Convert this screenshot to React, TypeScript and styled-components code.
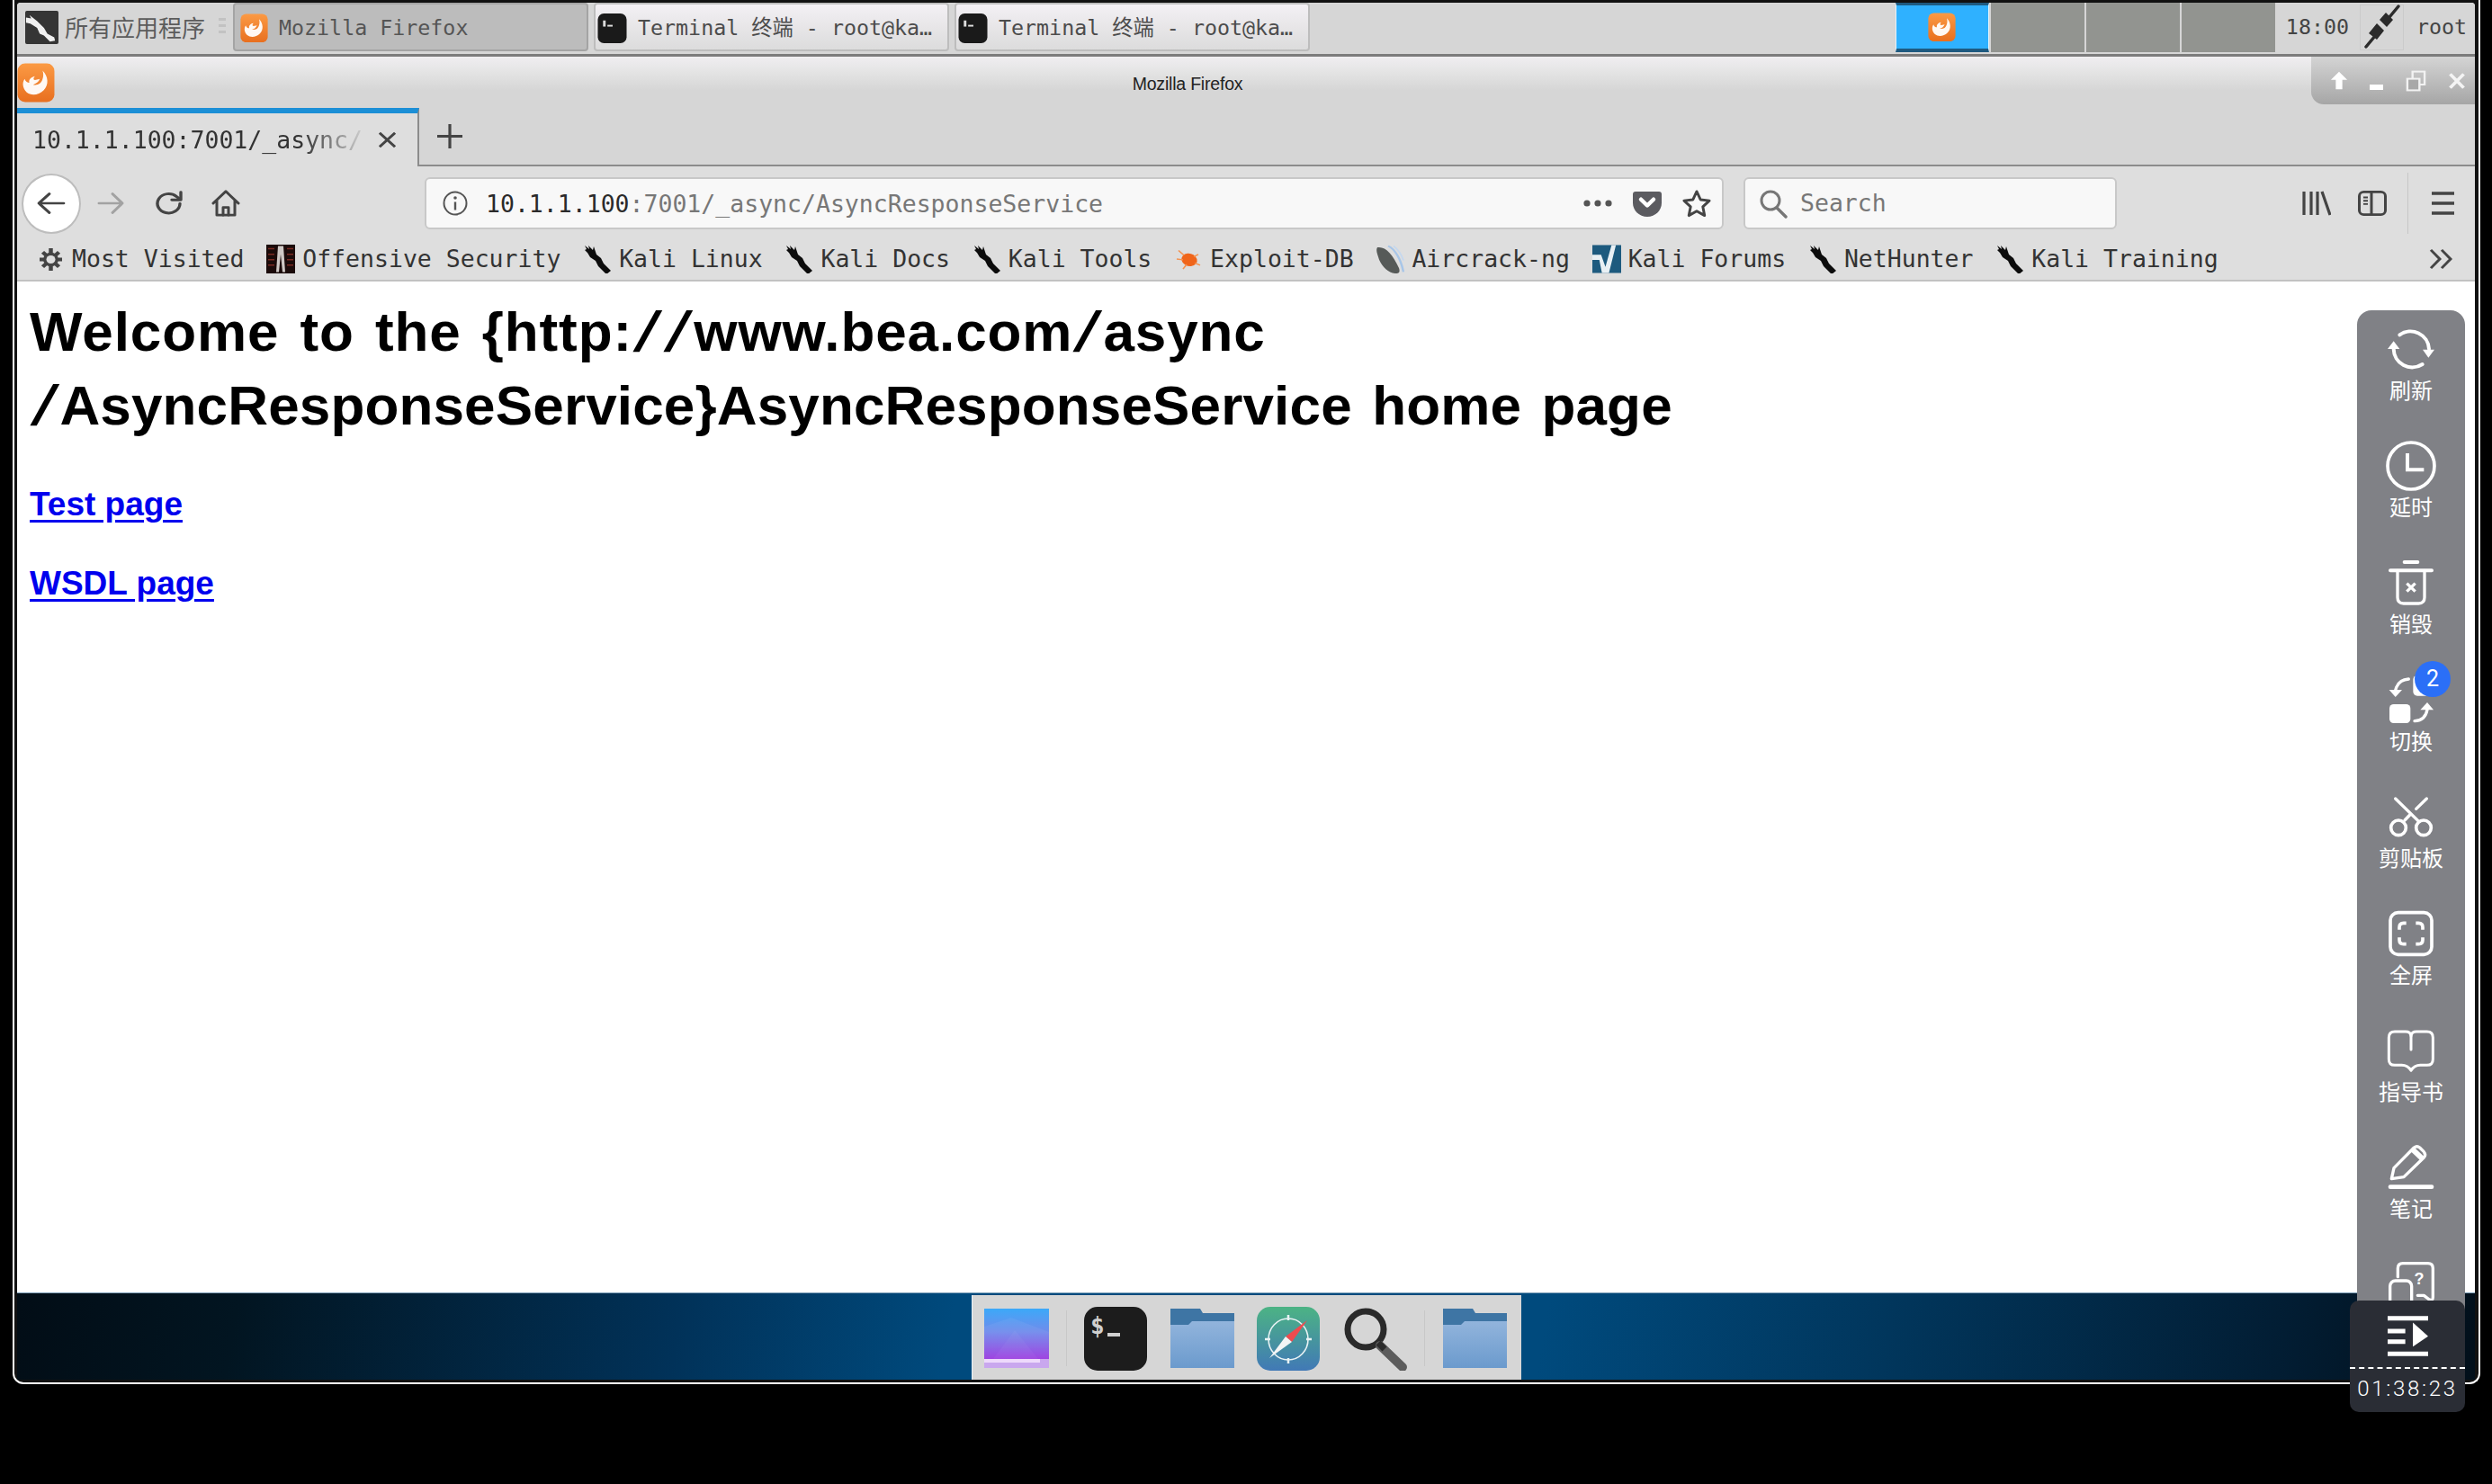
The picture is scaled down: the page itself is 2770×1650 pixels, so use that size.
import React from "react";
import styled, { createGlobalStyle } from "styled-components";

const MONO = `"DejaVu Sans Mono", "Noto Sans CJK SC", monospace`;
const SANS = `"Liberation Sans", Arial, sans-serif`;
const CJK = `"Noto Sans CJK SC", sans-serif`;

const GlobalStyle = createGlobalStyle`
    html, body {
        margin: 0;
        padding: 0;
        background: #000;
    }
    * {
        box-sizing: border-box;
    }
`;

const Page = styled.div`
    position: relative;
    width: 2770px;
    height: 1650px;
    background: #000;
    overflow: hidden;
`;

const Frame = styled.div`
    margin-left: 14px;
    width: 2743px;
    height: 1539px;
    padding: 3px 4px 3px 3px;
    background: #111;
    border: 2px solid #fff;
    border-top: none;
    border-radius: 0 0 12px 12px;
`;

const Screen = styled.div`
    display: flex;
    flex-direction: column;
    height: 100%;
    background: #fff;
    border-radius: 4px 4px 0 0;
    overflow: hidden;
`;

/* panel on top */
const TopBar = styled.div`
    display: flex;
    align-items: center;
    flex: none;
    height: 60px;
    padding: 0 9px 3px 8px;
    background: #d6d6d6;
    border-bottom: 3px solid #7c7c7c;
`;

const AppMenu = styled.div`
    display: flex;
    align-items: center;
    gap: 6px;
    color: #5c5c5c;
    font: 400 26px/1 ${CJK};
`;

const Handle = styled.div`
    width: 8px;
    height: 20px;
    margin: 0 8px 0 15px;
    background: repeating-linear-gradient(#c2c2c2 0 3px, transparent 3px 7px);
`;

const TaskList = styled.div`
    display: flex;
    gap: 6px;
`;

const Task = styled.div<{ $active?: boolean }>`
    display: flex;
    align-items: center;
    gap: 12px;
    width: 395px;
    height: 54px;
    padding: 2px 0 0 ${(p) => (p.$active ? "6px" : "2px")};
    color: ${(p) => (p.$active ? "#555" : "#4c4c4c")};
    font: 23.3px/1 ${MONO};
    white-space: nowrap;
    background: ${(p) => (p.$active ? "#bcbcbc" : "linear-gradient(#f3f0f4, #dcdcdc)")};
    border: 2px solid ${(p) => (p.$active ? "#a4a4a4" : "#bdbdbd")};
    border-radius: 4px;
`;

const Pager = styled.div`
    display: flex;
    gap: 2px;
    align-self: flex-start;
    margin-left: auto;
`;

const PagerCell = styled.div<{ $active?: boolean }>`
    display: flex;
    align-items: center;
    justify-content: center;
    width: 104px;
    height: 55px;
    background: ${(p) => (p.$active ? "#2fb1ff" : "#929490")};
    border: ${(p) => (p.$active ? "1px solid #e4f4ff" : "none")};
    border-top: ${(p) => (p.$active ? "3px solid #1f5a80" : "none")};
    border-bottom: ${(p) => (p.$active ? "4px solid #1f5a80" : "none")};
`;

const Clock = styled.div`
    margin-left: 12px;
    color: #444;
    font: 23.3px/1 ${MONO};
`;

const PlugBox = styled.div`
    display: flex;
    align-items: center;
    justify-content: center;
    width: 49px;
    height: 51px;
    margin: 0 14px 0 12px;
    border: 1px solid #cbcbcb;
`;

const UserName = styled.div`
    width: 56px;
    color: #444;
    font: 23.3px/1 ${MONO};
`;

/* window title */
const TitleBar = styled.div`
    display: flex;
    align-items: flex-start;
    flex: none;
    height: 57px;
    background: linear-gradient(#f0eef1 0, #e4e4e4 30%, #d6d6d6 65%);
`;

const TitleIcon = styled.div`
    flex: none;
    width: 42px;
    margin: 7px 0 0 0;
`;

const TitleText = styled.div`
    flex: 1;
    margin: 21px 0 0 10px;
    color: #222;
    font: 19.5px/1 ${SANS};
    letter-spacing: -0.2px;
    text-align: center;
`;

const WindowButtons = styled.div`
    display: flex;
    align-items: center;
    justify-content: space-between;
    flex: none;
    width: 182px;
    height: 53px;
    padding: 0 10px 0 21px;
    background: linear-gradient(#d4d4d4, #a6a6a6);
    border-radius: 0 0 0 14px;
`;

/* tabs */
const TabStrip = styled.div`
    display: flex;
    align-items: stretch;
    flex: none;
    height: 65px;
    background: #d6d6d6;
    border-bottom: 2px solid #8c8c8c;
`;

const Tab = styled.div`
    display: flex;
    align-items: center;
    width: 447px;
    height: 65px;
    padding: 0 23px 0 17px;
    background: #dedede;
    border-top: 6px solid #1c8fd6;
    border-right: 2px solid #8c8c8c;
`;

const TabTitle = styled.div`
    flex: 1;
    margin-right: 10px;
    overflow: hidden;
    color: #333;
    font: 26.5px/1.4 ${MONO};
    white-space: nowrap;
    mask-image: linear-gradient(90deg, #000 80%, transparent 100%);
`;

const NewTab = styled.div`
    display: flex;
    align-items: center;
    margin-left: 20px;
`;

/* navigation */
const NavBar = styled.div`
    display: flex;
    align-items: center;
    flex: none;
    height: 80px;
    padding: 2px 24px 0 5px;
    background: #dedede;
`;

const BackButton = styled.div`
    display: flex;
    align-items: center;
    justify-content: center;
    flex: none;
    width: 66px;
    height: 67px;
    background: #fff;
    border: 2px solid #bdbdbd;
    border-radius: 50%;
`;

const NavIcon = styled.div<{ $left: number }>`
    display: flex;
    align-items: center;
    justify-content: center;
    flex: none;
    width: 32px;
    margin-left: ${(p) => p.$left}px;
`;

const UrlBar = styled.div`
    display: flex;
    align-items: center;
    flex: none;
    width: 1444px;
    height: 58px;
    margin-left: 205px;
    padding: 0 11px 0 18px;
    background: #f8f8f8;
    border: 2px solid #c8c8c8;
    border-radius: 6px;
`;

const UrlText = styled.div`
    flex: 1;
    margin-left: 20px;
    padding-top: 2px;
    color: #777;
    font: 26.5px/1.3 ${MONO};
    white-space: nowrap;
    b {
        color: #2a2a2a;
        font-weight: 400;
    }
`;

const UrlActions = styled.div`
    display: flex;
    align-items: center;
    gap: 22px;
`;

const SearchBox = styled.div`
    display: flex;
    align-items: center;
    gap: 14px;
    flex: none;
    width: 415px;
    height: 58px;
    margin-left: 22px;
    padding: 1px 0 0 15px;
    color: #777;
    font: 26.5px/1.3 ${MONO};
    background: #f8f8f8;
    border: 2px solid #c8c8c8;
    border-radius: 6px;
`;

const ToolDivider = styled.div`
    flex: none;
    width: 1px;
    height: 68px;
    margin-left: 23px;
    background: #c6c6c6;
`;

/* bookmarks */
const BookmarkBar = styled.div`
    display: flex;
    align-items: center;
    flex: none;
    gap: 24.75px;
    height: 48px;
    padding: 0 24px;
    background: #dedede;
    border-bottom: 2px solid #c2c2c2;
`;

const Bookmark = styled.div<{ $gap?: number }>`
    display: flex;
    align-items: center;
    gap: ${(p) => p.$gap ?? 8}px;
    color: #333;
    font: 26.5px/1.3 ${MONO};
    white-space: nowrap;
`;

const BookmarkIcon = styled.div`
    display: flex;
    align-items: center;
    justify-content: center;
    flex: none;
    width: 32px;
    height: 32px;
`;

const Overflow = styled.div`
    display: flex;
    margin-left: auto;
`;

/* page */
const Content = styled.main`
    flex: 1;
    padding: 15px 0 0 14px;
    background: #fff;
`;

const Heading = styled.h1`
    margin: 0;
    color: #000;
    font: 700 62px/82px ${SANS};
    letter-spacing: 0.15px;
    word-spacing: 5px;
`;

const HeadingFirst = styled.span`
    letter-spacing: 0.9px;
`;

/* the source font has a much wider slash than Liberation Sans */
const Slash = styled.span`
    display: inline-block;
    margin: 0 8px;
    transform: skewX(-20deg);
`;

const LinkLine = styled.p`
    margin: 47px 0 0;
    font: 700 37px/44px ${SANS};
    & + & {
        margin-top: 44px;
    }
    a {
        color: #0000ee;
        text-underline-offset: 5px;
    }
`;

/* dock */
const DockBar = styled.div`
    display: flex;
    align-items: flex-end;
    justify-content: center;
    flex: none;
    height: 97px;
    border-top: 1px solid #7f9fb8;
    background: linear-gradient(100deg, #020d16 0, #021521 9%, #013259 27%, #004a7d 38%, #004a7d 62%, #01365c 76%, #021d33 92%, #020f1a 100%);
`;

const Dock = styled.div`
    display: flex;
    align-items: center;
    gap: 25px;
    width: 611px;
    height: 94px;
    padding: 2px 0 0 13px;
    background: #d6d6d6;
    border-left: 1px solid #e9f1f7;
`;

const DockDivider = styled.div`
    flex: none;
    width: 1px;
    height: 62px;
    margin: 0 -6px;
    background: #c8c8c8;
`;

/* floating tools on the right */
const Sidebar = styled.aside`
    position: absolute;
    top: 345px;
    left: 2620px;
    display: flex;
    flex-direction: column;
    align-items: center;
    width: 120px;
    height: 1120px;
    padding-top: 17px;
    background: #808186;
    border-radius: 16px 16px 0 0;
    overflow: hidden;
`;

const SideItem = styled.div`
    position: relative;
    display: flex;
    flex-direction: column;
    align-items: center;
    flex: none;
    height: 130px;
    color: #fff;
    font: 400 24px/30px ${CJK};
    svg {
        display: block;
        margin-bottom: 4px;
    }
`;

const Badge = styled.span`
    position: absolute;
    top: -17px;
    left: 30px;
    width: 40px;
    height: 40px;
    color: #fff;
    font: 400 25px/40px Roboto, sans-serif;
    text-align: center;
    background: #2b6ff7;
    border-radius: 50%;
`;

const Timer = styled.div`
    position: absolute;
    top: 1446px;
    left: 2612px;
    display: flex;
    flex-direction: column;
    align-items: center;
    width: 128px;
    height: 124px;
    padding-top: 17px;
    background: #2a2d35;
    border-radius: 10px;
`;

const TimerRule = styled.div`
    width: 100%;
    height: 0;
    margin-top: 12px;
    border-top: 2px dashed #fff;
`;

const TimerText = styled.div`
    margin-top: 8px;
    color: #fff;
    font: 300 24px/28px Roboto, sans-serif;
    letter-spacing: 2.7px;
`;

/* icons */
function FoxIcon({ size }: { size: number }) {
    const id = `fox${size}`;
    return (
        <svg width={size} height={size * 1.05} viewBox="0 0 40 42">
            <defs>
                <linearGradient id={id} x1="0" y1="0" x2="0" y2="1">
                    <stop offset="0" stopColor="#fb9a44" />
                    <stop offset="1" stopColor="#e86f1f" />
                </linearGradient>
            </defs>
            <rect x="0.5" y="0.5" width="39" height="41" rx="8" fill={`url(#${id})`} />
            <path
                d="M27 8c6 6 7 15 1 21-5 5-13 6-18 2-4-4-5-10-2-14 1 3 3 4 5 4-1-3 1-6 6-7-2 2-2 4 0 4l5-1c-1 3-4 5-7 6 4 1 9-1 10-6 1-3 1-6 0-9z"
                fill="#fff"
                opacity="0.95"
            />
        </svg>
    );
}

function TerminalGlyph() {
    return (
        <svg width="33" height="33" viewBox="0 0 33 34">
            <rect width="33" height="34" rx="7" fill="#1a1a1a" />
            <rect x="6" y="8" width="3" height="7" fill="#ddd" />
            <rect x="11" y="13" width="6" height="2" fill="#ddd" />
        </svg>
    );
}

function KaliBox() {
    return (
        <svg width="39" height="37" viewBox="0 0 39 39">
            <rect width="39" height="39" rx="2" fill="#353535" />
            <path d="M1 8 7 9 5 5l9 7 8 8 4 7 8 4 1 4-6 1-7-7-5-2-3-7-8-5-5-1z" fill="#f0f0f0" />
        </svg>
    );
}

function KaliMark() {
    return (
        <svg width="32" height="32" viewBox="0 0 32 32">
            <path d="M2 1l5 4-1-4 5 5 1-4 3 9 5 4 3 6 8 8-5 4-9-9-3-6-6-4-3-5-3-3 2-1z" fill="#0c0c0c" />
        </svg>
    );
}

function Plug() {
    return (
        <svg width="42" height="50" viewBox="0 0 42 50">
            <path d="M39 2 29 14M3 47l10-12" stroke="#2b2b2b" strokeWidth="3.5" strokeLinecap="round" />
            <path d="M25 9l8 8-7 8-8-8zM15 21l8 8-8 10-9-7z" fill="#2b2b2b" />
        </svg>
    );
}

const line = { fill: "none", stroke: "#444", strokeWidth: 3, strokeLinecap: "round", strokeLinejoin: "round" } as const;

function Arrow({ flip, color }: { flip?: boolean; color: string }) {
    return (
        <svg width="34" height="28" viewBox="0 0 32 32" preserveAspectRatio="none" style={flip ? { transform: "scaleX(-1)" } : undefined}>
            <path d="M3 16h26M14 4 3 16l11 12" {...line} stroke={color} />
        </svg>
    );
}

function Reload() {
    return (
        <svg width="32" height="29" viewBox="0 0 32 34" preserveAspectRatio="none">
            <path d="M28 17a12.500 12.500 0 1 1-4-9.500L28 11" {...line} strokeWidth="3.4" />
            <path d="M29 2v10H19" {...line} strokeWidth="3.4" />
        </svg>
    );
}

function Home() {
    return (
        <svg width="32" height="32" viewBox="0 0 32 34" preserveAspectRatio="none">
            <path d="M2 17 16 3l14 14M6 14v17h20V14" {...line} />
            <path d="M13 31v-9h6v9" {...line} />
        </svg>
    );
}

function InfoIcon() {
    return (
        <svg width="28" height="28" viewBox="0 0 28 28">
            <circle cx="14" cy="14" r="12.500" fill="none" stroke="#555" strokeWidth="2" />
            <circle cx="14" cy="8" r="1.800" fill="#555" />
            <path d="M14 12.500v9" stroke="#555" strokeWidth="2.400" />
        </svg>
    );
}

function Dots() {
    return (
        <svg width="34" height="10" viewBox="0 0 34 10">
            <circle cx="5" cy="5" r="3.600" fill="#555" />
            <circle cx="17" cy="5" r="3.600" fill="#555" />
            <circle cx="29" cy="5" r="3.600" fill="#555" />
        </svg>
    );
}

function Pocket() {
    return (
        <svg width="32" height="29" viewBox="0 0 32 30" preserveAspectRatio="none">
            <path d="M3 1h26a3 3 0 0 1 3 3v10c0 9-7 16-16 16S0 23 0 14V4a3 3 0 0 1 3-3z" fill="#5b5b60" />
            <path d="M9 10l7 7 7-7" fill="none" stroke="#fff" strokeWidth="4.500" strokeLinecap="round" strokeLinejoin="round" />
        </svg>
    );
}

function Star() {
    return (
        <svg width="34" height="33" viewBox="0 0 34 34">
            <path d="M17 3l4.300 9.300 10.200 1.200-7.500 7 2 10L17 25.500 8 30.500l2-10-7.500-7 10.200-1.200z" {...line} />
        </svg>
    );
}

function SearchIcon() {
    return (
        <svg width="32" height="32" viewBox="0 0 32 32">
            <circle cx="13" cy="12" r="10" fill="none" stroke="#777" strokeWidth="3" />
            <path d="M20 20l10 10" stroke="#777" strokeWidth="3.400" strokeLinecap="round" />
        </svg>
    );
}

function Library() {
    return (
        <svg width="32" height="28" viewBox="0 0 32 30" preserveAspectRatio="none">
            <path d="M2 1v28M10 1v28M17 1v28M22 1l9 28" stroke="#444" strokeWidth="3.200" fill="none" />
        </svg>
    );
}

function SidebarToggle() {
    return (
        <svg width="32" height="28" viewBox="0 0 32 30" preserveAspectRatio="none">
            <rect x="1.500" y="1.500" width="29" height="27" rx="5" fill="none" stroke="#444" strokeWidth="3" />
            <path d="M15 2v26" stroke="#444" strokeWidth="3" />
            <path d="M6 8h5M6 12h5M6 16h5" stroke="#444" strokeWidth="2" />
        </svg>
    );
}

function Burger() {
    return (
        <svg width="25" height="26" viewBox="0 0 25 26">
            <path d="M0 2h25M0 13h25M0 24h25" stroke="#444" strokeWidth="3.400" />
        </svg>
    );
}

function Chevrons() {
    return (
        <svg width="27" height="24" viewBox="0 0 27 26" preserveAspectRatio="none">
            <path d="M2 2l10 11L2 24M14 2l10 11-10 11" fill="none" stroke="#444" strokeWidth="3" />
        </svg>
    );
}

function Gear() {
    return (
        <svg width="27" height="27" viewBox="0 0 27 30" preserveAspectRatio="none">
            <g stroke="#444" strokeWidth="4.500">
                <path d="M13.500 1v28M1 15h25M4.500 6l18 18M22.500 6l-18 18" />
            </g>
            <circle cx="13.500" cy="15" r="8.500" fill="#444" />
            <circle cx="13.500" cy="15" r="5" fill="#dedede" />
        </svg>
    );
}

function OffsecIcon() {
    return (
        <svg width="32" height="32" viewBox="0 0 32 42" preserveAspectRatio="none">
            <rect width="32" height="42" fill="#1b0b0a" />
            <path d="M2 6h7M2 14h7M2 22h7M2 30h7M23 6h7M23 14h7M23 22h7M23 30h7" stroke="#7a2a22" strokeWidth="2" />
            <path d="M13 2h6l2 38h-3l-2-26-2 26h-3z" fill="#cfc9c6" />
        </svg>
    );
}

function ExploitIcon() {
    return (
        <svg width="28" height="24" viewBox="0 0 28 28" preserveAspectRatio="none">
            <ellipse cx="15" cy="15" rx="9" ry="8" fill="#f0651a" transform="rotate(35 15 15)" />
            <path d="M3 3l6 6M1 14l7 1M8 27l4-6M25 8l-5 3M27 22l-6-3" stroke="#f4924f" strokeWidth="1.600" />
        </svg>
    );
}

function AircrackIcon() {
    return (
        <svg width="32" height="32" viewBox="0 0 32 42" preserveAspectRatio="none">
            <path d="M14 2c7 4 14 18 17 38" fill="none" stroke="#a8c6e8" strokeWidth="2.500" />
            <path d="M20 2c5 5 9 13 11 21" fill="none" stroke="#c5d8ee" strokeWidth="2" />
            <path d="M2 4c9-2 17 10 24 30 1 4 1 7-2 8-8 1-16-8-20-20C2 14 0 8 2 4z" fill="#565a58" />
        </svg>
    );
}

function ForumIcon() {
    return (
        <svg width="33" height="32" viewBox="0 0 33 32">
            <rect width="33" height="32" fill="#1d5a7e" />
            <path d="M0 11h10l5 14 7-25h5l-8 32h-8L8 17H0z" fill="#e9f0f4" />
        </svg>
    );
}

function Wallpaper() {
    return (
        <svg width="72" height="66" viewBox="0 0 72 66">
            <defs>
                <linearGradient id="wall" x1="0" y1="0" x2="0" y2="1">
                    <stop offset="0" stopColor="#3ca9f8" />
                    <stop offset="0.45" stopColor="#6f8cec" />
                    <stop offset="1" stopColor="#9a3be0" />
                </linearGradient>
            </defs>
            <rect width="72" height="56" fill="url(#wall)" />
            <path d="M0 20 30 10l42 16v30H0z" fill="#ffffff" opacity="0.05" />
            <path d="M10 56 34 24l26 32z" fill="#ffffff" opacity="0.04" />
            <rect y="56" width="72" height="10" fill="#c9a7ee" />
            <rect y="56" width="62" height="4" fill="#edd9fb" />
        </svg>
    );
}

function DockTerminal() {
    return (
        <svg width="70" height="71" viewBox="0 0 70 71">
            <rect width="70" height="71" rx="15" fill="#1c1c1c" />
            <text x="7" y="30" fill="#d0d0d0" fontFamily={`"DejaVu Sans Mono", monospace`} fontWeight="700" fontSize="26">$</text>
            <rect x="26" y="29" width="14" height="4" fill="#d0d0d0" />
        </svg>
    );
}

function Folder({ id }: { id: string }) {
    return (
        <svg width="72" height="66" viewBox="0 0 72 66">
            <defs>
                <linearGradient id={id} x1="0" y1="0" x2="0" y2="1">
                    <stop offset="0" stopColor="#92b4dc" />
                    <stop offset="1" stopColor="#6b9acd" />
                </linearGradient>
            </defs>
            <path d="M1 0h33l3 5h35v20H1z" fill="#3e75a4" />
            <path d="M1 18h20l4-4h47v52H1z" fill={`url(#${id})`} />
        </svg>
    );
}

function Compass() {
    return (
        <svg width="70" height="71" viewBox="0 0 70 71">
            <defs>
                <linearGradient id="safari" x1="0" y1="0" x2="0" y2="1">
                    <stop offset="0" stopColor="#4cb384" />
                    <stop offset="1" stopColor="#4179b6" />
                </linearGradient>
            </defs>
            <rect width="70" height="71" rx="15" fill="url(#safari)" />
            <ellipse cx="35" cy="36" rx="22" ry="23" fill="none" stroke="#e8f2f4" strokeWidth="1.600" />
            <path d="M35 9v6M35 57v6M9 36h6M55 36h6" stroke="#e8f2f4" strokeWidth="2.500" />
            <path d="M56 15 39 39l-7-6z" fill="#ee4b4f" />
            <path d="M14 57 32 33l7 6z" fill="#f3f5f5" />
        </svg>
    );
}

function Magnifier() {
    return (
        <svg width="72" height="72" viewBox="0 0 72 72">
            <circle cx="26" cy="26" r="20" fill="none" stroke="#2a2a2a" strokeWidth="7" />
            <path d="M42 44l25 24" stroke="#5c5c5c" strokeWidth="10" strokeLinecap="round" />
            <path d="M40 41l7 7" stroke="#2a2a2a" strokeWidth="7" />
        </svg>
    );
}

/* Sidebar icons are drawn in 3x units, so each viewBox is 156 wide around the icon centre. */
const toolStroke = { fill: "none", stroke: "#fff", strokeWidth: 12, strokeLinecap: "round", strokeLinejoin: "round" } as const;

function Tool({ cx, cy, children }: { cx: number; cy: number; children: React.ReactNode }) {
    return (
        <svg width="52" height="52" viewBox={`${cx - 78} ${cy - 78} 156 156`} overflow="visible">
            {children}
        </svg>
    );
}

const tools = [
    {
        label: "刷新",
        icon: (
            <Tool cx={270} cy={175}>
                <path d="M232 128A62 62 0 0 1 330 175" {...toolStroke} />
                <path d="M308 226A62 62 0 0 1 212 175" {...toolStroke} />
                <path d="M309 177h39l-20 27zM192 175h40l-20-26z" fill="#fff" />
            </Tool>
        ),
    },
    {
        label: "延时",
        icon: (
            <Tool cx={270} cy={567}>
                <circle cx="270" cy="567" r="78" {...toolStroke} strokeWidth="11" />
                <path d="M258 525v55h55" {...toolStroke} strokeLinecap="butt" strokeLinejoin="miter" />
            </Tool>
        ),
    },
    {
        label: "销毁",
        icon: (
            <Tool cx={270} cy={957}>
                <path d="M248 888h44M201 916h138" {...toolStroke} />
                <path d="M225 916v90q0 20 20 20h50q20 0 20-20v-90" {...toolStroke} strokeWidth="10" />
                <path d="M256 959l28 27M284 959l-28 27" {...toolStroke} strokeWidth="10" strokeLinecap="butt" />
            </Tool>
        ),
    },
    {
        label: "切换",
        badge: "2",
        icon: (
            <Tool cx={270} cy={117}>
                <path d="M262 48q-36 2-44 38" {...toolStroke} strokeWidth="10" />
                <path d="M197 84h43l-22 24z" fill="#fff" />
                <rect x="277" y="36" width="68" height="68" rx="14" fill="#fff" />
                <rect x="198" y="132" width="70" height="63" rx="14" fill="#fff" />
                <path d="M282 188q36-2 42-38" {...toolStroke} strokeWidth="10" />
                <path d="M301 151h44l-21-25z" fill="#fff" />
            </Tool>
        ),
    },
    {
        label: "剪贴板",
        icon: (
            <Tool cx={270} cy={508}>
                <circle cx="228" cy="545" r="25" {...toolStroke} strokeWidth="11" />
                <circle cx="312" cy="545" r="25" {...toolStroke} strokeWidth="11" />
                <path d="M218 448l78 76M322 448l-35 34M269 499l-20 21" {...toolStroke} strokeWidth="10" />
            </Tool>
        ),
    },
    {
        label: "全屏",
        icon: (
            <Tool cx={270} cy={897}>
                <rect x="201" y="827" width="138" height="140" rx="26" {...toolStroke} strokeWidth="11" />
                <path
                    d="M231 884v-8q0-14 14-14h9M286 862h9q14 0 14 14v8M309 910v8q0 14-14 14h-9M254 932h-9q-14 0-14-14v-8"
                    {...toolStroke}
                    strokeWidth="11"
                    strokeLinecap="butt"
                />
            </Tool>
        ),
    },
    {
        label: "指导书",
        icon: (
            <Tool cx={272} cy={55}>
                <path
                    d="M198 12q0-20 20-20h36q16 0 18 14 2-14 18-14h35q20 0 20 20v72q0 20-20 20h-22q-20 0-31 18-11-18-31-18h-23q-20 0-20-20z"
                    {...toolStroke}
                    strokeWidth="9"
                />
                <path d="M272 6v46" {...toolStroke} strokeWidth="9" />
            </Tool>
        ),
    },
    {
        label: "笔记",
        icon: (
            <Tool cx={270} cy={447}>
                <path
                    d="M205 485l8-36 67-68q10-8 19 0l14 14q8 10 0 19l-67 65z"
                    {...toolStroke}
                    strokeWidth="10"
                />
                <path d="M274 386l34 32" {...toolStroke} strokeWidth="18" strokeLinecap="butt" />
                <path d="M201 512h138" {...toolStroke} strokeWidth="14" />
            </Tool>
        ),
    },
];

function HelpTool() {
    return (
        <SideItem>
            <Tool cx={270} cy={837}>
                <path
                    d="M226 812v-28q0-17 17-17h83q17 0 17 17v96q0 14-12 8l-18-14h-21"
                    {...toolStroke}
                    strokeWidth="10"
                />
                <rect x="200" y="825" width="72" height="85" rx="18" {...toolStroke} strokeWidth="10" />
                <text x="297" y="838" fill="#fff" fontFamily={`"Liberation Sans", sans-serif`} fontWeight="700" fontSize="54" textAnchor="middle">?</text>
            </Tool>
        </SideItem>
    );
}

function PanelIcon() {
    return (
        <svg width="45" height="45" viewBox="192 941 133 131">
            <path d="M192 948h133M192 1065h133" stroke="#fff" strokeWidth="15" />
            <path d="M192 990h58M192 1025h58" stroke="#fff" strokeWidth="15" />
            <path d="M275 962l50 45-50 34z" fill="#fff" />
        </svg>
    );
}

const bookmarks = [
    { name: "Offensive Security", icon: <OffsecIcon /> },
    { name: "Kali Linux", icon: <KaliMark /> },
    { name: "Kali Docs", icon: <KaliMark /> },
    { name: "Kali Tools", icon: <KaliMark /> },
    { name: "Exploit-DB", icon: <ExploitIcon /> },
    { name: "Aircrack-ng", icon: <AircrackIcon /> },
    { name: "Kali Forums", icon: <ForumIcon /> },
    { name: "NetHunter", icon: <KaliMark /> },
    { name: "Kali Training", icon: <KaliMark /> },
];

export default function App() {
    return (
        <Page>
            <GlobalStyle />
            <Frame>
                <Screen>
                    <TopBar>
                        <AppMenu>
                            <KaliBox />
                            所有应用程序
                        </AppMenu>
                        <Handle />
                        <TaskList>
                            <Task $active>
                                <FoxIcon size={31} />
                                Mozilla Firefox
                            </Task>
                            <Task>
                                <TerminalGlyph />
                                Terminal 终端 - root@ka…
                            </Task>
                            <Task>
                                <TerminalGlyph />
                                Terminal 终端 - root@ka…
                            </Task>
                        </TaskList>
                        <Pager>
                            <PagerCell $active>
                                <FoxIcon size={31} />
                            </PagerCell>
                            <PagerCell />
                            <PagerCell />
                            <PagerCell />
                        </Pager>
                        <Clock>18:00</Clock>
                        <PlugBox>
                            <Plug />
                        </PlugBox>
                        <UserName>root</UserName>
                    </TopBar>

                    <TitleBar>
                        <TitleIcon>
                            <FoxIcon size={42} />
                        </TitleIcon>
                        <TitleText>Mozilla Firefox</TitleText>
                        <WindowButtons>
                            <svg width="20" height="21" viewBox="0 0 22 26" preserveAspectRatio="none">
                                <path d="M11 1 1 12h6v13h8V12h6z" fill="#fff" />
                            </svg>
                            <svg width="15" height="22" viewBox="0 0 15 22">
                                <rect y="15" width="15" height="6" fill="#fff" />
                            </svg>
                            <svg width="23" height="24" viewBox="0 0 24 30" preserveAspectRatio="none">
                                <rect x="8" y="2" width="14" height="18" fill="none" stroke="#f2f2f2" strokeWidth="2.500" />
                                <rect x="2" y="12" width="14" height="16" fill="#a8a8a8" stroke="#f2f2f2" strokeWidth="2.500" />
                            </svg>
                            <svg width="20" height="20" viewBox="0 0 24 26" preserveAspectRatio="none">
                                <path d="M3 3l18 20M21 3 3 23" stroke="#f4f4f4" strokeWidth="4.500" />
                            </svg>
                        </WindowButtons>
                    </TitleBar>

                    <TabStrip>
                        <Tab>
                            <TabTitle>10.1.1.100:7001/_async/</TabTitle>
                            <svg width="21" height="19" viewBox="0 0 22 22" preserveAspectRatio="none">
                                <path d="M2 2l18 18M20 2 2 20" stroke="#444" strokeWidth="3.200" />
                            </svg>
                        </Tab>
                        <NewTab>
                            <svg width="28" height="27" viewBox="0 0 28 28" preserveAspectRatio="none">
                                <path d="M14 0v28M0 14h28" stroke="#444" strokeWidth="3.200" />
                            </svg>
                        </NewTab>
                    </TabStrip>

                    <NavBar>
                        <BackButton>
                            <Arrow color="#444" />
                        </BackButton>
                        <NavIcon $left={17}>
                            <Arrow flip color="#a2a2a2" />
                        </NavIcon>
                        <NavIcon $left={33}>
                            <Reload />
                        </NavIcon>
                        <NavIcon $left={31}>
                            <Home />
                        </NavIcon>
                        <UrlBar>
                            <InfoIcon />
                            <UrlText>
                                <b>10.1.1.100</b>:7001/_async/AsyncResponseService
                            </UrlText>
                            <UrlActions>
                                <Dots />
                                <Pocket />
                                <Star />
                            </UrlActions>
                        </UrlBar>
                        <SearchBox>
                            <SearchIcon />
                            Search
                        </SearchBox>
                        <NavIcon $left={206}>
                            <Library />
                        </NavIcon>
                        <NavIcon $left={30}>
                            <SidebarToggle />
                        </NavIcon>
                        <ToolDivider />
                        <NavIcon $left={22}>
                            <Burger />
                        </NavIcon>
                    </NavBar>

                    <BookmarkBar>
                        <Bookmark $gap={10}>
                            <Gear />
                            Most Visited
                        </Bookmark>
                        {bookmarks.map((b) => (
                            <Bookmark key={b.name}>
                                <BookmarkIcon>{b.icon}</BookmarkIcon>
                                {b.name}
                            </Bookmark>
                        ))}
                        <Overflow>
                            <Chevrons />
                        </Overflow>
                    </BookmarkBar>

                    <Content>
                        <Heading>
                            <HeadingFirst>
                                Welcome to the {"{"}http:<Slash>/</Slash><Slash>/</Slash>www.bea.com<Slash>/</Slash>async
                            </HeadingFirst>
                            <br />
                            <Slash>/</Slash>AsyncResponseService{"}"}AsyncResponseService home page
                        </Heading>
                        <LinkLine>
                            <a href="#test">Test page</a>
                        </LinkLine>
                        <LinkLine>
                            <a href="#wsdl">WSDL page</a>
                        </LinkLine>
                    </Content>

                    <DockBar>
                        <Dock>
                            <Wallpaper />
                            <DockDivider />
                            <DockTerminal />
                            <Folder id="folderA" />
                            <Compass />
                            <Magnifier />
                            <DockDivider />
                            <Folder id="folderB" />
                        </Dock>
                    </DockBar>
                </Screen>
            </Frame>

            <Sidebar>
                {tools.map((t) => (
                    <SideItem key={t.label}>
                        {t.icon}
                        {t.badge && <Badge>{t.badge}</Badge>}
                        {t.label}
                    </SideItem>
                ))}
                <HelpTool />
            </Sidebar>

            <Timer>
                <PanelIcon />
                <TimerRule />
                <TimerText>01:38:23</TimerText>
            </Timer>
        </Page>
    );
}
